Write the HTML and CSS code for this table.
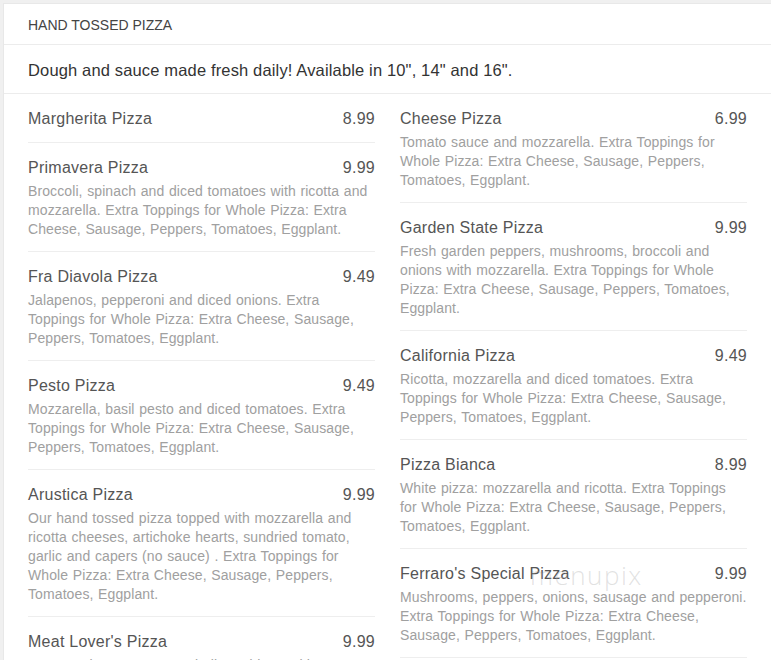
FILE: index.html
```html
<!DOCTYPE html>
<html lang="en">
<head>
<meta charset="utf-8">
<title>Hand Tossed Pizza</title>
<link rel="stylesheet" href="styles.css">
</head>
<body>
<section class="card">
  <header class="card-head">HAND TOSSED PIZZA</header>
  <p class="card-sub">Dough and sauce made fresh daily! Available in 10", 14" and 16".</p>
  <div class="menu">
    <div class="col">
      <div class="item">
        <div class="item-row"><span class="name">Margherita Pizza</span><span class="price">8.99</span></div>
      </div>
      <div class="item">
        <div class="item-row"><span class="name">Primavera Pizza</span><span class="price">9.99</span></div>
        <p class="desc">Broccoli, spinach and diced tomatoes with ricotta and mozzarella. Extra Toppings for Whole Pizza: Extra Cheese, Sausage, Peppers, Tomatoes, Eggplant.</p>
      </div>
      <div class="item">
        <div class="item-row"><span class="name">Fra Diavola Pizza</span><span class="price">9.49</span></div>
        <p class="desc">Jalapenos, pepperoni and diced onions. Extra Toppings for Whole Pizza: Extra Cheese, Sausage, Peppers, Tomatoes, Eggplant.</p>
      </div>
      <div class="item">
        <div class="item-row"><span class="name">Pesto Pizza</span><span class="price">9.49</span></div>
        <p class="desc">Mozzarella, basil pesto and diced tomatoes. Extra Toppings for Whole Pizza: Extra Cheese, Sausage, Peppers, Tomatoes, Eggplant.</p>
      </div>
      <div class="item">
        <div class="item-row"><span class="name">Arustica Pizza</span><span class="price">9.99</span></div>
        <p class="desc">Our hand tossed pizza topped with mozzarella and ricotta cheeses, artichoke hearts, sundried tomato, garlic and capers (no sauce) . Extra Toppings for Whole Pizza: Extra Cheese, Sausage, Peppers, Tomatoes, Eggplant.</p>
      </div>
      <div class="item">
        <div class="item-row"><span class="name">Meat Lover's Pizza</span><span class="price">9.99</span></div>
        <p class="desc">Pepperoni, sausage, meatballs and ham with mozzarella. Extra Toppings for Whole Pizza: Extra Cheese, Sausage, Peppers, Tomatoes, Eggplant.</p>
      </div>
    </div>
    <div class="col">
      <div class="item">
        <div class="item-row"><span class="name">Cheese Pizza</span><span class="price">6.99</span></div>
        <p class="desc">Tomato sauce and mozzarella. Extra Toppings for Whole Pizza: Extra Cheese, Sausage, Peppers, Tomatoes, Eggplant.</p>
      </div>
      <div class="item">
        <div class="item-row"><span class="name">Garden State Pizza</span><span class="price">9.99</span></div>
        <p class="desc">Fresh garden peppers, mushrooms, broccoli and onions with mozzarella. Extra Toppings for Whole Pizza: Extra Cheese, Sausage, Peppers, Tomatoes, Eggplant.</p>
      </div>
      <div class="item">
        <div class="item-row"><span class="name">California Pizza</span><span class="price">9.49</span></div>
        <p class="desc">Ricotta, mozzarella and diced tomatoes. Extra Toppings for Whole Pizza: Extra Cheese, Sausage, Peppers, Tomatoes, Eggplant.</p>
      </div>
      <div class="item">
        <div class="item-row"><span class="name">Pizza Bianca</span><span class="price">8.99</span></div>
        <p class="desc">White pizza: mozzarella and ricotta. Extra Toppings for Whole Pizza: Extra Cheese, Sausage, Peppers, Tomatoes, Eggplant.</p>
      </div>
      <div class="item">
        <div class="item-row"><span class="name">Ferraro's Special Pizza</span><span class="price">9.99</span></div>
        <p class="desc">Mushrooms, peppers, onions, sausage and pepperoni. Extra Toppings for Whole Pizza: Extra Cheese, Sausage, Peppers, Tomatoes, Eggplant.</p>
      </div>
    </div>
  </div>
  <span class="watermark">menupix</span>
</section>
</body>
</html>
```
FILE: styles.css
```css
html, body {
  margin: 0;
  padding: 0;
  overflow: hidden;
}
body {
  background: #f0f0f0;
  font-family: "Liberation Sans", Arial, sans-serif;
  height: 660px;
}
.card {
  position: relative;
  margin: 3px 0 0 3px;
  background: #fff;
  border-top: 1px solid #e8e8e8;
  border-left: 1px solid #e8e8e8;
  min-height: 800px;
}
.card-head {
  font-size: 14px;
  line-height: 16px;
  color: #444;
  padding: 13px 24px 11px;
  border-bottom: 1px solid #ececec;
}
.card-sub {
  margin: 0;
  font-size: 16.5px;
  letter-spacing: 0.15px;
  line-height: 20px;
  color: #333;
  padding: 15px 24px 13px;
  border-bottom: 1px solid #ececec;
}
.menu {
  display: flex;
  gap: 25px;
  padding: 0 24px;
}
.col {
  flex: 1 1 0;
  min-width: 0;
}
.item {
  padding: 11px 0 10px;
  border-bottom: 1px solid #eeeeee;
}
.item-row {
  display: flex;
  justify-content: space-between;
  font-size: 16px;
  letter-spacing: 0.25px;
  line-height: 27px;
  color: #555;
}
.desc {
  margin: 1px 0 2px;
  font-size: 14px;
  letter-spacing: 0.1px;
  word-spacing: 0.6px;
  line-height: 19px;
  color: #a0a0a0;
}
.watermark {
  position: absolute;
  left: 526px;
  top: 553px;
  font-family: "Open Sans", sans-serif;
  font-weight: 300;
  font-size: 26px;
  letter-spacing: 1.5px;
  color: rgba(170, 170, 170, 0.35);
  pointer-events: none;
}
```
